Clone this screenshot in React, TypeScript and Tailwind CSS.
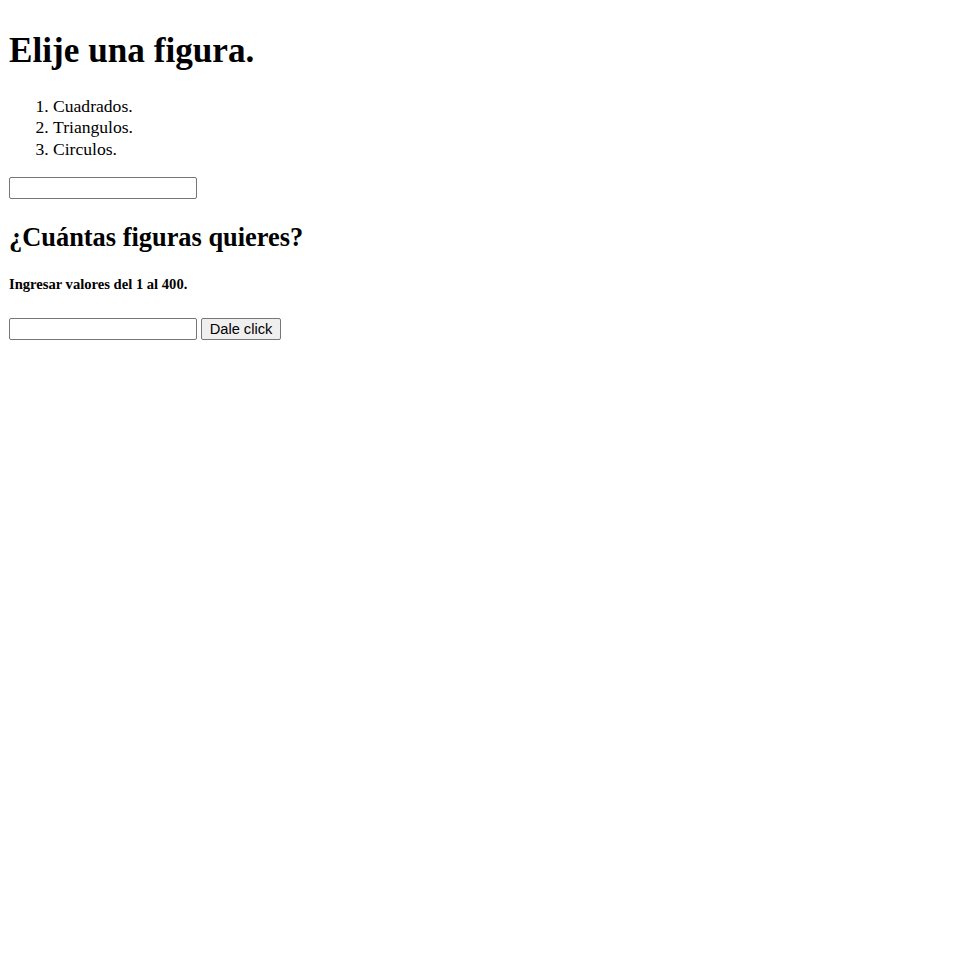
import React from 'react';

const App: React.FC = () => {
  return (
    <div className="min-h-screen bg-white px-[9px] pt-[31px] text-black font-['Liberation_Serif','Times_New_Roman',serif]">
      <h1 className="text-[35.2px] font-bold leading-[40.5px]">Elije una figura.</h1>
      <ol className="mt-[24.2px] list-decimal pl-[44px] text-[17.6px] leading-[21.5px]">
        <li>Cuadrados.</li>
        <li>Triangulos.</li>
        <li>Circulos.</li>
      </ol>
      <input
        type="text"
        className="mt-[16.8px] block h-[22px] w-[188px] rounded-[2px] border border-[#767676] bg-white px-[2px] outline-none"
      />
      <h2 className="mt-[23px] text-[26.4px] font-bold leading-[30.3px]">¿Cuántas figuras quieres?</h2>
      <h5 className="mt-[24px] text-[14.6px] font-bold leading-[16.8px]">Ingresar valores del 1 al 400.</h5>
      <div className="mt-[25px] flex items-center gap-[4px]">
        <input
          type="text"
          className="h-[22px] w-[188px] rounded-[2px] border border-[#767676] bg-white px-[2px] outline-none"
        />
        <button className="h-[22px] w-[80px] rounded-[2px] border border-[#767676] bg-[#efefef] pt-[1px] text-[14.67px] leading-none text-black font-['Liberation_Sans',Arial,sans-serif]">
          Dale click
        </button>
      </div>
    </div>
  );
};

export default App;
